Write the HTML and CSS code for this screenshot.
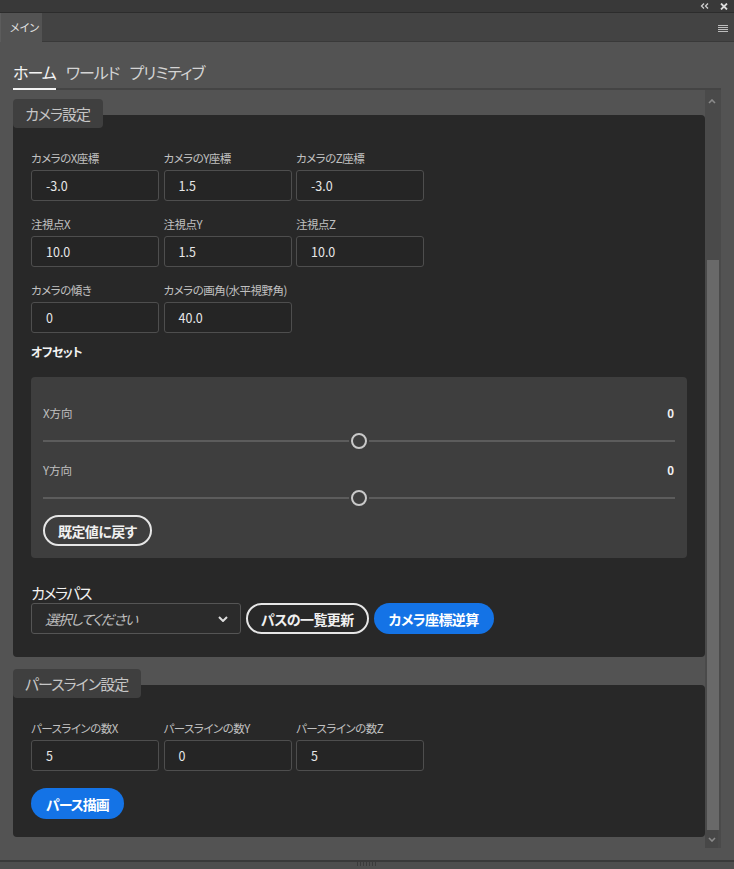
FILE: index.html
```html
<!DOCTYPE html>
<html lang="ja">
<head>
<meta charset="utf-8">
<title>メイン</title>
<link rel="stylesheet" href="styles.css">
</head>
<body>
<div class="topbar">
  <svg class="tb-ico" width="9" height="6" viewBox="0 0 9 6"><polyline points="4,0.5 1.5,3 4,5.5" fill="none" stroke="#cfcfcf" stroke-width="1.3"/><polyline points="8,0.5 5.5,3 8,5.5" fill="none" stroke="#cfcfcf" stroke-width="1.3"/></svg>
  <svg class="tb-ico" width="8" height="7" viewBox="0 0 8 7"><path d="M1 0.5 L7 6.5 M7 0.5 L1 6.5" stroke="#dcdcdc" stroke-width="1.8"/></svg>
</div>
<div class="tabrow">
  <div class="doc-tab">メイン</div>
  <div class="tabrow-rest">
    <svg class="menu-ico" width="10" height="7" viewBox="0 0 10 7"><path d="M0 0.5H10M0 2.5H10M0 4.5H10M0 6.5H10" stroke="#bdbdbd" stroke-width="1"/></svg>
  </div>
</div>
<div class="panel">
  <nav class="tabs">
    <span class="tab active">ホーム</span>
    <span class="tab">ワールド</span>
    <span class="tab">プリミティブ</span>
  </nav>
  <div class="scrollwrap">
    <div class="content">
      <section class="sec">
        <div class="sec-head">カメラ設定</div>
        <div class="sec-body">
          <div class="grid">
            <div class="field"><label>カメラのX座標</label><div class="input">-3.0</div></div>
            <div class="field"><label>カメラのY座標</label><div class="input">1.5</div></div>
            <div class="field"><label>カメラのZ座標</label><div class="input">-3.0</div></div>
            <div class="field"><label>注視点X</label><div class="input">10.0</div></div>
            <div class="field"><label>注視点Y</label><div class="input">1.5</div></div>
            <div class="field"><label>注視点Z</label><div class="input">10.0</div></div>
            <div class="field"><label>カメラの傾き</label><div class="input">0</div></div>
            <div class="field"><label>カメラの画角(水平視野角)</label><div class="input">40.0</div></div>
          </div>
          <div class="subhead">オフセット</div>
          <div class="offset-box">
            <div class="slider-head"><span>X方向</span><span class="val">0</span></div>
            <div class="slider"><span class="track"></span><span class="thumb"></span><span class="track"></span></div>
            <div class="slider-head second"><span>Y方向</span><span class="val">0</span></div>
            <div class="slider"><span class="track"></span><span class="thumb"></span><span class="track"></span></div>
            <button class="btn outline reset">既定値に戻す</button>
          </div>
          <div class="path-label">カメラパス</div>
          <div class="path-row">
            <div class="select"><span>選択してください</span><svg width="10" height="6" viewBox="0 0 10 6"><polyline points="1,1 5,5 9,1" fill="none" stroke="#dddddd" stroke-width="2"/></svg></div>
            <button class="btn outline">パスの一覧更新</button>
            <button class="btn primary">カメラ座標逆算</button>
          </div>
        </div>
      </section>
      <section class="sec sec2">
        <div class="sec-head">パースライン設定</div>
        <div class="sec-body body2">
          <div class="grid">
            <div class="field"><label>パースラインの数X</label><div class="input">5</div></div>
            <div class="field"><label>パースラインの数Y</label><div class="input">0</div></div>
            <div class="field"><label>パースラインの数Z</label><div class="input">5</div></div>
          </div>
          <button class="btn primary draw">パース描画</button>
        </div>
      </section>
    </div>
    <div class="scrollbar">
      <div class="sb-up"><svg width="8" height="5" viewBox="0 0 8 5"><polyline points="1,4 4,1 7,4" fill="none" stroke="#8a8a8a" stroke-width="1.6"/></svg></div>
      <div class="sb-track"><div class="sb-thumb"></div></div>
      <div class="sb-down"><svg width="8" height="5" viewBox="0 0 8 5"><polyline points="1,1 4,4 7,1" fill="none" stroke="#8a8a8a" stroke-width="1.6"/></svg></div>
    </div>
  </div>
  <div class="footer"><div class="grip"></div></div>
</div>
</body>
</html>
```

FILE: styles.css
```css
* { box-sizing: border-box; margin: 0; padding: 0; }
html, body { width: 734px; height: 869px; overflow: hidden; }
body {
  background: #535353;
  font-family: "Noto Sans CJK JP", "Noto Sans", sans-serif;
  font-feature-settings: "palt";
  color: #dddddd;
}
.topbar {
  height: 13px;
  background: #393939;
  border-bottom: 1px solid #2c2c2c;
  display: flex;
  justify-content: flex-end;
  align-items: center;
  gap: 11px;
  padding-right: 6px;
}
.tabrow {
  height: 29px;
  display: flex;
  background: #434343;
}
.doc-tab {
  width: 42px;
  background: #535353;
  border-left: 1px solid #5c5c5c;
  font-size: 11px;
  line-height: 29px;
  color: #e2e2e2;
  padding-left: 9px;
}
.tabrow-rest {
  flex: 1;
  border-bottom: 1px solid #393939;
  display: flex;
  justify-content: flex-end;
  align-items: center;
  padding-right: 6px;
  padding-top: 2px;
}
.panel { display: flex; flex-direction: column; }
.tabs {
  height: 48px;
  margin: 0 13px;
  display: flex;
  gap: 10px;
  background: linear-gradient(#444444, #444444) left bottom / 100% 2px no-repeat;
}
.tab {
  font-size: 16px;
  line-height: 24px;
  letter-spacing: -1px;
  padding-top: 18px;
  color: #d4d4d4;
  border-bottom: 2px solid transparent;
}
.tab.active { color: #f4f4f4; border-bottom-color: #f4f4f4; }
.scrollwrap {
  display: flex;
  height: 770px;
  margin-left: 13px;
  width: 708px;
}
.content {
  width: 692px;
  padding-top: 9px;
  overflow: hidden;
}
.sec-head {
  position: relative;
  z-index: 1;
  width: fit-content;
  height: 29px;
  background: #3f3f3f;
  border-radius: 4px;
  padding: 0 13px 0 12px;
  font-size: 15px;
  letter-spacing: -1px;
  line-height: 29px;
  color: #c6c6c6;
}
.sec-body {
  margin-top: -13px;
  background: #282828;
  border-radius: 0 4px 4px 4px;
  padding: 35px 18px 23px 18px;
}
.sec2 { margin-top: 12px; }
.body2 { padding-bottom: 18px; }
.grid {
  display: grid;
  grid-template-columns: repeat(3, 128px);
  column-gap: 4.5px;
  row-gap: 15px;
}
.field label {
  display: block;
  font-size: 11.5px;
  letter-spacing: -0.5px;
  line-height: 16px;
  color: #c0c0c0;
  margin-bottom: 4px;
  white-space: nowrap;
}
.input {
  height: 31px;
  border: 1px solid #4e4e4e;
  border-radius: 3px;
  background: #252525;
  padding-left: 14px;
  font-size: 12.5px;
  line-height: 29px;
  color: #e8e8e8;
}
.subhead {
  margin-top: 11px;
  font-size: 12px;
  letter-spacing: -0.5px;
  line-height: 16px;
  font-weight: bold;
  color: #f2f2f2;
}
.offset-box {
  margin-top: 17px;
  background: #3e3e3e;
  border-radius: 4px;
  padding: 28px 12px 12px 12px;
}
.slider-head {
  display: flex;
  justify-content: space-between;
  font-size: 11.5px;
  line-height: 16px;
  color: #c0c0c0;
}
.slider-head.second { margin-top: 11px; }
.slider-head .val { color: #f0f0f0; font-weight: bold; padding-right: 1px; }
.slider {
  margin-top: 10px;
  height: 20px;
  display: flex;
  align-items: center;
  gap: 2px;
}
.track { flex: 1; height: 2px; background: #5c5c5c; }
.thumb {
  width: 16px;
  height: 16px;
  border: 2px solid #c9c9c9;
  border-radius: 50%;
  background: #3e3e3e;
}
.btn {
  height: 31px;
  border-radius: 16px;
  font-family: "Noto Sans CJK JP", "Noto Sans", sans-serif;
  font-feature-settings: "palt";
  font-size: 14px;
  font-weight: bold;
  letter-spacing: -0.6px;
  padding: 0 13px;
  cursor: pointer;
  white-space: nowrap;
}
.btn.outline {
  background: transparent;
  border: 2px solid #e6e6e6;
  color: #f0f0f0;
}
.btn.primary {
  background: #1473e6;
  border: none;
  color: #ffffff;
  padding: 0 15px;
}
.reset { margin-top: 7px; }
.path-label {
  margin-top: 24px;
  font-size: 15px;
  letter-spacing: -1.5px;
  line-height: 21px;
  color: #f2f2f2;
}
.path-row {
  display: flex;
  gap: 5px;
}
.select {
  width: 210px;
  height: 31px;
  border: 1px solid #555555;
  border-radius: 3px;
  background: #2b2b2b;
  display: flex;
  align-items: center;
  justify-content: space-between;
  padding: 0 12px 0 13px;
  font-size: 14px;
  letter-spacing: -1.2px;
  font-style: italic;
  color: #bdbdbd;
}
.draw { margin-top: 17px; letter-spacing: -1px; }
.scrollbar {
  width: 16px;
  height: 758px;
  background: #4a4a4a;
  display: flex;
  flex-direction: column;
}
.sb-up {
  height: 22px;
  display: flex;
  justify-content: center;
  align-items: center;
  padding-right: 2px;
}
.sb-track { flex: 1; padding: 148px 2px 0 2px; }
.sb-thumb { height: 100%; background: #696969; }
.sb-down {
  height: 18px;
  width: 13px;
  background: #474747;
  display: flex;
  justify-content: center;
  align-items: center;
}
.footer {
  height: 9px;
  border-top: 2px solid #3a3a3a;
  background: #4e4e4e;
  display: flex;
  justify-content: center;
}
.grip {
  width: 20px;
  height: 4px;
  background: repeating-linear-gradient(90deg, #3b3b3b 0 1px, transparent 1px 3px);
}
```
